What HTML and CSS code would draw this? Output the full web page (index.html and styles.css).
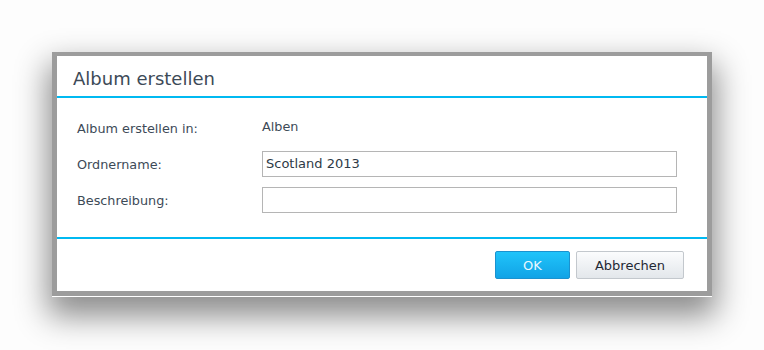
FILE: index.html
```html
<!DOCTYPE html>
<html>
<head>
<meta charset="utf-8">
<link rel="stylesheet" href="styles.css">
</head>
<body>
<div class="stage">
  <div class="dialog">
    <div class="header">Album erstellen</div>
    <div class="content">
      <div class="row row-static">
        <div class="label">Album erstellen in:</div>
        <div class="value">Alben</div>
      </div>
      <div class="row">
        <div class="label">Ordnername:</div>
        <div class="field">Scotland 2013</div>
      </div>
      <div class="row">
        <div class="label">Beschreibung:</div>
        <div class="field"></div>
      </div>
    </div>
    <div class="footer">
      <button class="btn btn-ok">OK</button>
      <button class="btn btn-cancel">Abbrechen</button>
    </div>
  </div>
</div>
</body>
</html>
```

FILE: styles.css
```css
html, body {
  margin: 0;
  padding: 0;
  background: #fdfdfd;
  width: 764px;
  height: 350px;
  overflow: hidden;
}
.stage {
  padding: 52px 0 0 52px;
  font-family: "DejaVu Sans", Verdana, sans-serif;
  color: #3d4a57;
}
.dialog {
  width: 650px;
  background: #fff;
  border-style: solid;
  border-color: #9c9c9c;
  border-width: 4px 5px 5px 5px;
  box-shadow: 0 1px 0 #fff, 0 16px 30px 4px rgba(0,0,0,0.45);
}
.header {
  height: 42px;
  box-sizing: border-box;
  padding: 12px 0 0 16px;
  font-size: 18px;
  line-height: 22px;
  border-bottom: 2px solid #00b9f1;
}
.content {
  height: 141px;
  box-sizing: border-box;
  padding: 19px 0 0 20px;
  border-bottom: 2px solid #00b9f1;
}
.row {
  display: flex;
  align-items: center;
  height: 26px;
  margin-bottom: 10px;
}
.row-static {
  height: 22px;
  margin-bottom: 12px;
}
.label {
  width: 185px;
  font-size: 12.8px;
}
.value {
  font-size: 12.8px;
  margin-top: -3px;
}
.field {
  width: 415px;
  height: 26px;
  box-sizing: border-box;
  border: 1px solid #b5b5b5;
  font-size: 13px;
  line-height: 24px;
  padding-left: 3px;
  color: #2e3a46;
}
.footer {
  height: 52px;
  box-sizing: border-box;
  display: flex;
  justify-content: flex-end;
  align-items: flex-start;
  gap: 6px;
  padding: 12px 23px 0 0;
}
.btn {
  height: 28px;
  box-sizing: border-box;
  border-radius: 2px;
  font-family: "DejaVu Sans", Verdana, sans-serif;
  font-size: 13px;
  padding: 0;
}
.btn-ok {
  width: 75px;
  background: linear-gradient(#20c4fa, #11a3e6);
  border: 1px solid #1b92cf;
  color: #eaf8ff;
}
.btn-cancel {
  width: 108px;
  background: linear-gradient(#fbfcfd, #e3e7eb);
  border: 1px solid #c3c8cd;
  color: #1e2833;
}
```
